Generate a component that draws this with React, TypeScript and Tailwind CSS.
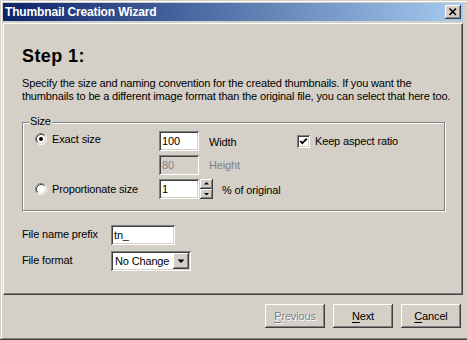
import React from "react";

const raised =
  "shadow-[inset_-1px_-1px_#404040,inset_1px_1px_#ffffff,inset_-2px_-2px_#808080,inset_2px_2px_#d4d0c8]";
const sunken =
  "shadow-[inset_1px_1px_#808080,inset_-1px_-1px_#ffffff,inset_2px_2px_#404040,inset_-2px_-2px_#d4d0c8]";

function Radio({ checked }: { checked?: boolean }) {
  return (
    <svg width="12" height="12" viewBox="0 0 12 12" className="shrink-0">
      <circle cx="6" cy="6" r="5" fill="#ffffff" />
      <path d="M2.11 9.89 A5.5 5.5 0 0 1 9.89 2.11" fill="none" stroke="#808080" strokeWidth="1" />
      <path d="M2.82 9.18 A4.5 4.5 0 0 1 9.18 2.82" fill="none" stroke="#404040" strokeWidth="1" />
      <path d="M9.89 2.11 A5.5 5.5 0 0 1 2.11 9.89" fill="none" stroke="#ffffff" strokeWidth="1" />
      <path d="M9.18 2.82 A4.5 4.5 0 0 1 2.82 9.18" fill="none" stroke="#d4d0c8" strokeWidth="1" />
      {checked && <circle cx="6" cy="6" r="2" fill="#000000" />}
    </svg>
  );
}

function TextBox({
  value,
  width,
  disabled,
}: {
  value: string;
  width: string;
  disabled?: boolean;
}) {
  return (
    <div
      className={`${width} h-[20px] ${sunken} ${
        disabled ? "bg-[#d4d0c8] text-[#808080]" : "bg-white text-black"
      } flex items-center pl-[3px] shrink-0`}
    >
      {value}
    </div>
  );
}

export default function App() {
  return (
    <div className="w-[467px] h-[340px] bg-[#d4d0c8] overflow-hidden font-['Liberation_Sans',Arial,sans-serif] text-[11px] tracking-[-0.15px] text-black">
      <div className="h-[340px] pt-px pl-px border-b border-[#404040]">
        <div className="h-[338px] border-t border-l border-white border-b border-b-[#808080] pt-px pl-px flex flex-col">
          {/* Title bar */}
          <div className="w-[460px] h-[18px] bg-[linear-gradient(to_right,#0a246a,#a6caf0)] flex items-center justify-between pl-[2px] pr-[2px]">
            <span className="text-white font-bold text-[12px] tracking-[-0.15px] leading-none">
              Thumbnail Creation Wizard
            </span>
            <div className={`w-[16px] h-[14px] bg-[#d4d0c8] ${raised} flex items-center justify-center`}>
              <svg width="16" height="14" viewBox="0 0 16 14">
                <path d="M4.5 3.5 L11 10 M11 3.5 L4.5 10" stroke="#000" strokeWidth="1.7" fill="none" />
              </svg>
            </div>
          </div>

          {/* Panel */}
          <div className="mt-[2px] w-[460px] h-[272px] border-t border-l border-white border-r border-b border-r-[#404040] border-b-[#404040]">
            <div className="h-full border-r border-b border-[#808080] pl-[18px] pt-[21px]">
              <div className="text-[18px] font-bold leading-[22px] tracking-[0.4px]">Step 1:</div>
              <p className="mt-[10px] leading-[13px]">
                Specify the size and naming convention for the created thumbnails. If you want the
                <br />
                thumbnails to be a different image format than the original file, you can select that here too.
              </p>

              {/* Group box */}
              <div className="relative mt-[19px] w-[423px] border border-[#808080] shadow-[inset_1px_1px_#ffffff,1px_1px_#ffffff] pl-[12px] pt-[8px] pb-[11px]">
                <span className="absolute -top-[8px] left-[6px] px-[1px] bg-[#d4d0c8] leading-[13px]">Size</span>
                <div className="flex flex-col gap-[4px]">
                  <div className="flex items-center h-[20px]">
                    <div className="w-[124px] flex items-center gap-[5px] mb-[4px]">
                      <Radio checked />
                      <span>Exact size</span>
                    </div>
                    <TextBox value="100" width="w-[40px]" />
                    <span className="ml-[10px] w-[88px] mt-[2px]">Width</span>
                    <div className={`w-[13px] h-[13px] bg-white ${sunken} flex items-center justify-center`}>
                      <svg width="13" height="13" viewBox="0 0 13 13">
                        <path d="M3.2 6 L5.3 8.2 L9.8 3.6" stroke="#000" strokeWidth="1.8" fill="none" />
                      </svg>
                    </div>
                    <span className="ml-[5px]">Keep aspect ratio</span>
                  </div>
                  <div className="flex items-center h-[20px]">
                    <div className="w-[124px]" />
                    <TextBox value="80" width="w-[40px]" disabled />
                    <span className="ml-[10px] text-[#808080] mt-[1px]">Height</span>
                  </div>
                  <div className="flex items-center h-[20px]">
                    <div className="w-[124px] flex items-center gap-[5px]">
                      <Radio />
                      <span>Proportionate size</span>
                    </div>
                    <TextBox value="1" width="w-[40px]" />
                    <div className="ml-[1px] flex flex-col h-[20px]">
                      <div className={`w-[13px] h-[10px] bg-[#d4d0c8] ${raised} flex items-center justify-center`}>
                        <svg width="13" height="10" viewBox="0 0 13 10">
                          <path d="M6.5 3 L9 5.5 L4 5.5 Z" fill="#000" />
                        </svg>
                      </div>
                      <div className={`w-[13px] h-[10px] bg-[#d4d0c8] ${raised} flex items-center justify-center`}>
                        <svg width="13" height="10" viewBox="0 0 13 10">
                          <path d="M4 4 L9 4 L6.5 6.5 Z" fill="#000" />
                        </svg>
                      </div>
                    </div>
                    <span className="ml-[9px] mt-[2px]">% of original</span>
                  </div>
                </div>
              </div>

              {/* File fields */}
              <div className="mt-[14px] flex flex-col gap-[6px]">
                <div className="flex items-start h-[20px]">
                  <span className="w-[89px] mt-[1px]">File name prefix</span>
                  <TextBox value="tn_" width="w-[64px]" />
                </div>
                <div className="flex items-start h-[20px]">
                  <span className="w-[89px] mt-[1px]">File format</span>
                  <div className={`w-[80px] h-[20px] bg-white ${sunken} flex items-center justify-between pl-[4px] pr-[2px]`}>
                    <span>No Change</span>
                    <div className={`w-[16px] h-[16px] bg-[#d4d0c8] ${raised} flex items-center justify-center`}>
                      <svg width="16" height="16" viewBox="0 0 16 16">
                        <path d="M4.5 6.5 L11.5 6.5 L8 10 Z" fill="#000" />
                      </svg>
                    </div>
                  </div>
                </div>
              </div>
            </div>
          </div>

          {/* Buttons */}
          <div className="w-[460px] flex justify-end gap-[8px] pt-[9px] pr-[2px]">
            <div className={`w-[60px] h-[24px] bg-[#d4d0c8] ${raised} flex items-center justify-center text-[#808080] [text-shadow:1px_1px_0_#ffffff]`}>
              <span>
                <span className="underline underline-offset-[2px]">P</span>revious
              </span>
            </div>
            <div className={`w-[60px] h-[24px] bg-[#d4d0c8] ${raised} flex items-center justify-center`}>
              <span>
                <span className="underline underline-offset-[2px]">N</span>ext
              </span>
            </div>
            <div className={`w-[60px] h-[24px] bg-[#d4d0c8] ${raised} flex items-center justify-center`}>
              <span>
                <span className="underline underline-offset-[2px]">C</span>ancel
              </span>
            </div>
          </div>
        </div>
      </div>
    </div>
  );
}
